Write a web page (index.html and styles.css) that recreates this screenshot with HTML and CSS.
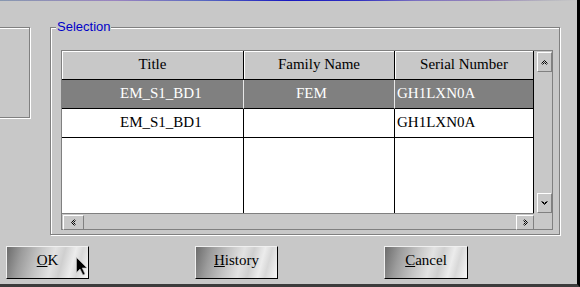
FILE: index.html
```html
<!DOCTYPE html>
<html lang="en">
<head>
    <meta charset="UTF-8">
    <title>Selection</title>
    <link rel="stylesheet" href="styles.css">
</head>
<body>
    <div class="screen">
        <div class="top-strip"></div>

        <!-- Upper area: side panel and selection group -->
        <div class="upper">
            <div class="side-panel"></div>

            <div class="groupbox">
                <span class="legend">Selection</span>
                <div class="grid">
                    <div class="list">
                        <div class="cell head">Title</div>
                        <div class="cell head">Family Name</div>
                        <div class="cell head">Serial Number</div>

                        <div class="cell sel col-title">EM_S1_BD1</div>
                        <div class="cell sel col-family">FEM</div>
                        <div class="cell sel col-serial">GH1LXN0A</div>

                        <div class="cell col-title">EM_S1_BD1</div>
                        <div class="cell col-family"></div>
                        <div class="cell col-serial">GH1LXN0A</div>

                        <div class="cell empty"></div>
                        <div class="cell empty"></div>
                        <div class="cell empty"></div>
                    </div>

                    <div class="vscroll">
                        <div class="sbtn vbtn">
                            <svg width="7" height="5" viewBox="0 0 7 5"><polyline points="0.5,3.5 3.5,0.5 6.5,3.5" fill="none" stroke="#000"/><polyline points="1.5,4.5 3.5,2.5 5.5,4.5" fill="none" stroke="#000"/></svg>
                        </div>
                        <div class="sbtn vbtn">
                            <svg width="7" height="5" viewBox="0 0 7 5"><polyline points="0.5,0.5 3.5,3.5 6.5,0.5" fill="none" stroke="#000"/><polyline points="1.5,0.5 3.5,2.5 5.5,0.5" fill="none" stroke="#000"/></svg>
                        </div>
                    </div>

                    <div class="hscroll">
                        <div class="sbtn hbtn-left">
                            <svg width="5" height="7" viewBox="0 0 5 7"><polyline points="3.5,0.5 0.5,3.5 3.5,6.5" fill="none" stroke="#000"/><polyline points="4.5,1.5 2.5,3.5 4.5,5.5" fill="none" stroke="#000"/></svg>
                        </div>
                        <div class="sbtn hbtn-right">
                            <svg width="5" height="7" viewBox="0 0 5 7"><polyline points="1.5,0.5 4.5,3.5 1.5,6.5" fill="none" stroke="#000"/><polyline points="0.5,1.5 2.5,3.5 0.5,5.5" fill="none" stroke="#000"/></svg>
                        </div>
                    </div>

                    <div class="corner"></div>
                </div>
            </div>
        </div>

        <!-- Dialog buttons -->
        <div class="buttons">
            <button class="btn btn-ok"><u>O</u>K</button>
            <button class="btn btn-history"><u>H</u>istory</button>
            <button class="btn btn-cancel"><u>C</u>ancel</button>
        </div>

        <!-- Mouse pointer over OK -->
        <svg class="cursor" width="12" height="19" viewBox="0 0 12 19">
            <path d="M0.5 0.5 L0.5 15.5 L4 12 L7 18 L9 17 L6.2 11 L11 11 Z" fill="#000" stroke="#c8c8c8" stroke-width="0.6"/>
        </svg>
    </div>
</body>
</html>
```

FILE: styles.css
```css
/* Old-style dialog */
* {
    box-sizing: border-box;
}

body {
    margin: 0;
    background-color: #c8c8c8;
    font-family: "Liberation Serif", "Times New Roman", serif;
    font-size: 15px;
    color: #000;
}

.screen {
    position: relative;
    width: 580px;
    height: 287px;
    overflow: hidden;
    background-color: #c8c8c8;
    border-right: 3px solid #000;
    border-bottom: 3px solid #3c3c3c;
}

.top-strip {
    height: 1px;
    background: linear-gradient(90deg, #8898b0 0%, #9a84c0 20%, #5a6ac0 35%, #1818c0 50%, #3030c0 62%, #7a70c0 72%, #9a88b8 85%, #b8b8c0 95%, #c8c8c8 100%);
}

.upper {
    display: flex;
    align-items: flex-start;
    margin-top: 26px;
}

/* etched frames */
.side-panel {
    width: 40px;
    height: 91px;
    margin-left: -10px;
    border: 1px solid #808080;
    box-shadow: 1px 1px 0 #fff, inset 1px 1px 0 #fff;
}

.groupbox {
    position: relative;
    width: 510px;
    height: 208px;
    margin-left: 20px;
    padding: 22px 0 0 10px;
    border: 1px solid #808080;
    box-shadow: 1px 1px 0 #fff, inset 1px 1px 0 #fff;
}

.legend {
    position: absolute;
    top: -9px;
    left: 5px;
    padding: 0 1px;
    background-color: #c8c8c8;
    color: #0000c8;
    font-family: "Liberation Sans", Arial, sans-serif;
    font-size: 13px;
    line-height: 15px;
}

/* list control */
.grid {
    display: grid;
    grid-template-columns: 472px 18px;
    grid-template-rows: 162px 16px;
    width: 492px;
    height: 180px;
    border: 1px solid #808080;
    background-color: #c8c8c8;
}

.list {
    display: grid;
    grid-template-columns: 182px 151px 139px;
    grid-template-rows: 29px 29px 29px 75px;
    background-color: #fff;
}

.cell {
    border-right: 1px solid #000;
    border-bottom: 1px solid #000;
    line-height: 27px;
    white-space: nowrap;
    overflow: hidden;
}

.head {
    background-color: #c8c8c8;
    box-shadow: inset 1px 1px 0 #fff;
    text-align: center;
}

.sel {
    background-color: #808080;
    color: #fff;
    border-right-color: #e8e8e8;
}

.sel.col-serial {
    border-right-color: #000;
}

.col-title {
    padding-left: 58px;
}

.col-family {
    padding-left: 52px;
}

.col-serial {
    padding-left: 2px;
}

.empty {
    border-bottom: none;
}

/* scroll bars */
.vscroll {
    display: flex;
    flex-direction: column;
    justify-content: space-between;
    padding: 1px 0 0 3px;
}

.hscroll {
    display: flex;
    justify-content: space-between;
    padding: 1px 0 0 1px;
    border-top: 1px solid #808080;
}

.sbtn {
    display: flex;
    align-items: center;
    justify-content: center;
    background-color: #c8c8c8;
    border: 1px solid;
    border-color: #fff #808080 #808080 #fff;
}

.vbtn {
    width: 15px;
    height: 20px;
}

.hbtn-left {
    width: 21px;
    height: 15px;
}

.hbtn-right {
    width: 18px;
    height: 15px;
}

.corner {
    border-top: 1px solid #c8c8c8;
}

/* dialog buttons */
.buttons {
    display: flex;
    margin-top: 11px;
}

.btn {
    width: 83px;
    height: 33px;
    padding: 0 0 4px;
    border: 1px solid;
    border-color: #f0f0f0 #000 #000 #f0f0f0;
    background: linear-gradient(105deg, #6c6c6c 0%, #9c9c9c 18%, #c4c4c4 38%, #e2e2e2 55%, #cfcfcf 66%, #ececec 78%, #d8d8d8 86%, #f8f8f8 100%);
    font-family: "Liberation Serif", "Times New Roman", serif;
    font-size: 15px;
    line-height: 27px;
    color: #000;
    text-align: center;
}

.btn-ok {
    margin-left: 6px;
}

.btn-history {
    margin-left: 106px;
}

.btn-cancel {
    width: 84px;
    margin-left: 106px;
}

.cursor {
    position: absolute;
    left: 76px;
    top: 257px;
}
```
